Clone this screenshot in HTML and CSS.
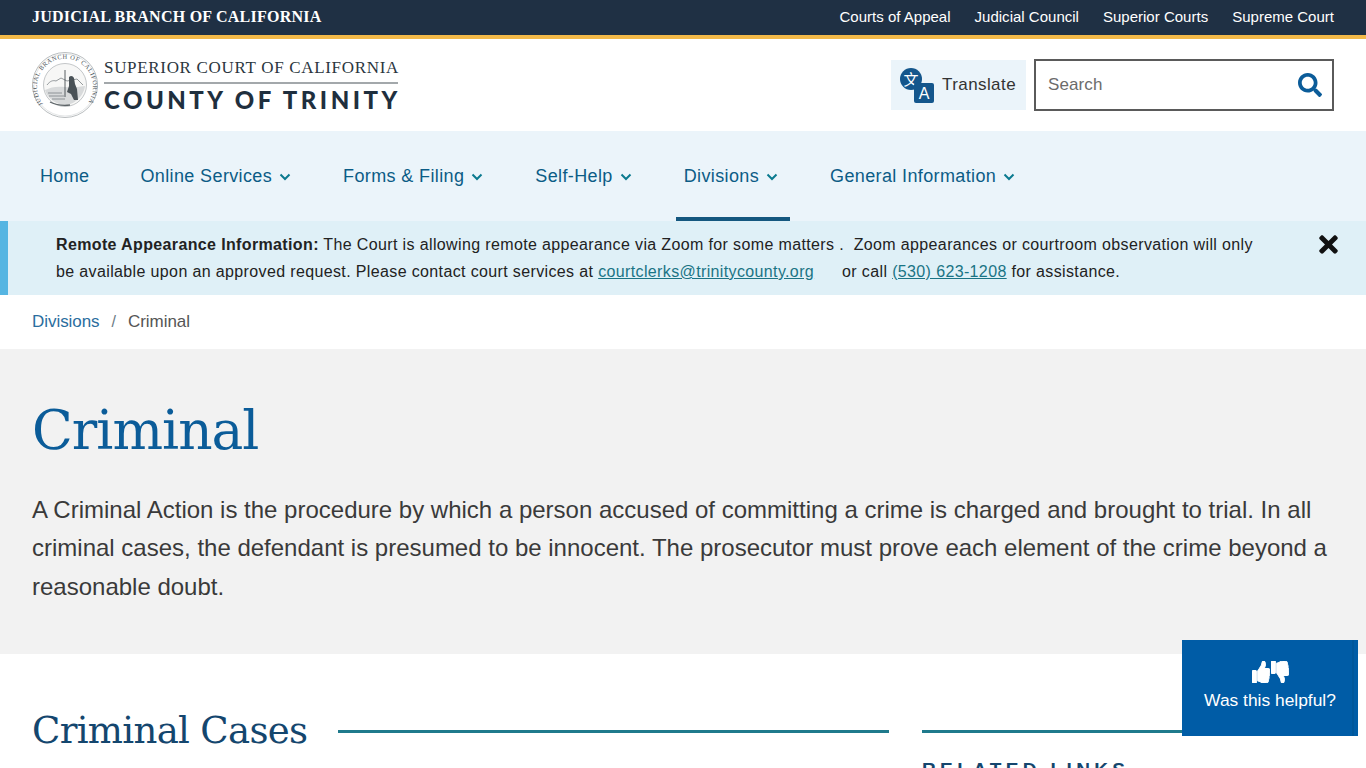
FILE: index.html
```html
<!DOCTYPE html>
<html lang="en">
<head>
<meta charset="utf-8">
<title>Criminal - Superior Court of California, County of Trinity</title>
<link rel="stylesheet" href="styles.css">
</head>
<body>
<div class="topbar">
  <a class="branch" href="#">JUDICIAL BRANCH OF CALIFORNIA</a>
  <nav class="toplinks">
    <a href="#">Courts of Appeal</a>
    <a href="#">Judicial Council</a>
    <a href="#">Superior Courts</a>
    <a href="#">Supreme Court</a>
  </nav>
</div>
<header class="masthead">
  <a class="logo" href="#">
    <svg class="seal" viewBox="0 0 66 66" aria-hidden="true">
      <circle cx="33" cy="33" r="32.5" fill="#fff" stroke="#8a9094" stroke-width=".6"/>
      <circle cx="33" cy="33" r="31" fill="none" stroke="#b9bdc0" stroke-width=".4"/>
      <circle cx="33" cy="33" r="21.500" fill="#f7f7f6" stroke="#8b9094" stroke-width=".5"/>
      <defs><path id="sealArc" d="M11 52A28 28 0 1 1 55 52"/></defs>
      <text class="seal-text"><textPath href="#sealArc">JUDICIAL BRANCH OF CALIFORNIA</textPath></text>
      <path d="M15 33c3-4 6-5 9-4l5-3 6 3 10-2 6 6" fill="none" stroke="#7b8185" stroke-width=".8"/>
      <path d="M13 38c6-3 12-4 20-3 6 1 12 0 20-1-1 9-10 19-20 19-9 0-18-7-20-15z" fill="#d8dadb"/>
      <path d="M16 41h14M17 44h15M20 47h13" stroke="#7b8185" stroke-width=".8"/>
      <path d="M33 18v27" stroke="#30383e" stroke-width=".8"/>
      <path d="M37 25c2-2 4-1 5 1l1 6 2 5 1 11h-4l-3-6-4-2 2-6z" fill="#4a5257"/>
      <path d="M18 50c6 3 12 4 20 3" stroke="#5d6468" stroke-width="1.300" fill="none"/>
    </svg>
    <span class="logo-words">
      <span class="logo-top">SUPERIOR COURT OF CALIFORNIA</span>
      <span class="logo-bottom">COUNTY OF TRINITY</span>
    </span>
  </a>
  <div class="tools">
    <button class="translate" type="button">
      <span class="tr-icon" aria-hidden="true">
        <span class="tr-zh">文</span>
        <span class="tr-en">A</span>
      </span>
      Translate
    </button>
    <form class="search">
      <input class="search-input" type="text" placeholder="Search" aria-label="Search">
      <svg class="search-icon" viewBox="0 0 512 512" aria-hidden="true"><path d="M505 442.7L405.3 343c-4.5-4.5-10.6-7-17-7H372c27.6-35.3 44-79.7 44-128C416 93.1 322.9 0 208 0S0 93.1 0 208s93.1 208 208 208c48.3 0 92.7-16.4 128-44v16.3c0 6.4 2.5 12.5 7 17l99.7 99.7c9.4 9.4 24.6 9.4 33.9 0l28.3-28.3c9.4-9.4 9.4-24.6.1-34zM208 336c-70.7 0-128-57.2-128-128 0-70.7 57.2-128 128-128 70.7 0 128 57.2 128 128 0 70.7-57.2 128-128 128z"/></svg>
    </form>
  </div>
</header>
<nav class="mainnav">
  <a class="nav-item" href="#">Home</a>
  <a class="nav-item" href="#">Online Services<svg class="chev" viewBox="0 0 12 8"><path d="M1.5 1.5 6 6l4.500-4.500"/></svg></a>
  <a class="nav-item" href="#">Forms &amp; Filing<svg class="chev" viewBox="0 0 12 8"><path d="M1.5 1.5 6 6l4.500-4.500"/></svg></a>
  <a class="nav-item" href="#">Self-Help<svg class="chev" viewBox="0 0 12 8"><path d="M1.5 1.5 6 6l4.500-4.500"/></svg></a>
  <a class="nav-item active" href="#">Divisions<svg class="chev" viewBox="0 0 12 8"><path d="M1.5 1.5 6 6l4.500-4.500"/></svg></a>
  <a class="nav-item" href="#">General Information<svg class="chev" viewBox="0 0 12 8"><path d="M1.5 1.5 6 6l4.500-4.500"/></svg></a>
</nav>
<section class="alert">
  <p class="alert-text"><strong>Remote Appearance Information:</strong> The Court is allowing remote appearance via Zoom for some matters .&nbsp; Zoom appearances or courtroom observation will only be available upon an approved request. Please contact court services at <a href="#">courtclerks@trinitycounty.org</a><span class="gap"></span>or call <a href="#">(530) 623-1208</a> for assistance.</p>
  <svg class="alert-close" viewBox="0 0 352 512" aria-label="Close"><path d="M242.72 256l100.07-100.07c12.28-12.28 12.28-32.19 0-44.48l-22.24-22.24c-12.28-12.28-32.19-12.28-44.48 0L176 189.28 75.93 89.21c-12.28-12.28-32.19-12.28-44.48 0L9.21 111.45c-12.28 12.28-12.28 32.19 0 44.48L109.28 256 9.21 356.07c-12.28 12.28-12.28 32.19 0 44.48l22.24 22.24c12.28 12.28 32.2 12.28 44.48 0L176 322.72l100.07 100.07c12.28 12.28 32.2 12.28 44.48 0l22.24-22.24c12.28-12.28 12.28-32.19 0-44.48L242.72 256z"/></svg>
</section>
<nav class="crumbs">
  <a href="#">Divisions</a><span class="sep">/</span><span>Criminal</span>
</nav>
<section class="hero">
  <h1>Criminal</h1>
  <p>A Criminal Action is the procedure by which a person accused of committing a crime is charged and brought to trial. In all criminal cases, the defendant is presumed to be innocent. The prosecutor must prove each element of the crime beyond a reasonable doubt.</p>
</section>
<main class="content">
  <div class="primary">
    <h2>Criminal Cases</h2>
    <span class="rule"></span>
  </div>
  <aside class="side">
    <span class="side-rule"></span>
    <h3>Related Links</h3>
  </aside>
</main>
<button class="helpful" type="button">
  <span class="thumbs" aria-hidden="true">
    <svg viewBox="0 0 512 512" preserveAspectRatio="none"><path d="M104 224H24c-13.255 0-24 10.745-24 24v240c0 13.255 10.745 24 24 24h80c13.255 0 24-10.745 24-24V248c0-13.255-10.745-24-24-24zM384 81.452c0 42.416-25.97 66.208-33.277 94.548h101.723c33.397 0 59.397 27.746 59.553 58.098.084 17.938-7.546 37.249-19.439 49.197l-.11.11c9.836 23.337 8.237 56.037-9.308 79.469 8.681 25.895-.069 57.704-16.382 74.757 4.298 17.598 2.244 32.575-6.148 44.632C440.202 511.587 389.616 512 346.839 512l-2.845-.001c-48.287-.017-87.806-17.598-119.56-31.725-15.957-7.099-36.821-15.887-52.651-16.178-6.54-.12-11.783-5.457-11.783-11.998v-213.77c0-3.2 1.282-6.271 3.558-8.521 39.614-39.144 56.648-80.587 89.117-113.111 14.804-14.832 20.188-37.236 25.393-58.902C282.515 39.293 291.817 0 312 0c24 0 72 8 72 81.452z"/></svg>
    <svg class="down" viewBox="0 0 512 512" preserveAspectRatio="none"><path d="M104 224H24c-13.255 0-24 10.745-24 24v240c0 13.255 10.745 24 24 24h80c13.255 0 24-10.745 24-24V248c0-13.255-10.745-24-24-24zM384 81.452c0 42.416-25.97 66.208-33.277 94.548h101.723c33.397 0 59.397 27.746 59.553 58.098.084 17.938-7.546 37.249-19.439 49.197l-.11.11c9.836 23.337 8.237 56.037-9.308 79.469 8.681 25.895-.069 57.704-16.382 74.757 4.298 17.598 2.244 32.575-6.148 44.632C440.202 511.587 389.616 512 346.839 512l-2.845-.001c-48.287-.017-87.806-17.598-119.56-31.725-15.957-7.099-36.821-15.887-52.651-16.178-6.54-.12-11.783-5.457-11.783-11.998v-213.77c0-3.2 1.282-6.271 3.558-8.521 39.614-39.144 56.648-80.587 89.117-113.111 14.804-14.832 20.188-37.236 25.393-58.902C282.515 39.293 291.817 0 312 0c24 0 72 8 72 81.452z"/></svg>
  </span>
  <span class="helpful-label">Was this helpful?</span>
</button>
</body>
</html>
```
FILE: styles.css
```css
* { box-sizing: border-box; }
html, body { margin: 0; height: 100%; overflow: hidden; }
body { font-family: "Liberation Sans", Arial, sans-serif; color: #333; background: #fff; }
a { text-decoration: none; color: inherit; }

.topbar { height: 39px; background: #1f3044; border-bottom: 4px solid #f2b949; padding: 0 32px 2px; display: flex; justify-content: space-between; align-items: center; color: #fff; }
.branch { font-family: "Liberation Serif", "Times New Roman", serif; font-weight: 700; font-size: 16px; letter-spacing: .24px; }
.toplinks { display: flex; gap: 24px; font-size: 15px; letter-spacing: .01px; }

.masthead { height: 92px; padding: 0 32px; display: flex; justify-content: space-between; align-items: center; }
.logo { display: flex; align-items: center; gap: 6px; }
.seal { width: 66px; height: 66px; display: block; }
.seal-text { font-family: "Liberation Serif", serif; font-size: 6.4px; letter-spacing: .55px; fill: #4a5257; }
.logo-words { display: flex; flex-direction: column; width: 294px; padding-top: 2px; }
.logo-top { font-family: "Liberation Serif", serif; font-size: 17px; letter-spacing: .68px; line-height: 20px; color: #2b3640; border-bottom: 2px solid #a3a8ab; padding-bottom: 4px; white-space: nowrap; }
.logo-bottom { font-family: Lato, sans-serif; font-weight: 900; font-size: 24px; letter-spacing: 3.5px; line-height: 28px; margin-top: 2px; color: #1f2f3e; white-space: nowrap; }

.tools { display: flex; align-items: center; gap: 8px; }
.translate { height: 50px; width: 135px; border: 0; background: #ebf4fa; display: flex; align-items: center; gap: 8px; padding: 0 0 0 9px; font: 17px "Liberation Sans", sans-serif; letter-spacing: .42px; color: #333; }
.tr-icon { position: relative; width: 34px; height: 35px; display: block; flex: none; }
.tr-zh { position: absolute; left: 0; top: 0; width: 22px; height: 22px; border-radius: 50%; background: #14568c; color: #fff; font: 15px/21px "Noto Sans CJK SC", sans-serif; text-align: center; letter-spacing: 0; }
.tr-en { position: absolute; right: 0; bottom: 0; width: 20px; height: 20px; border-radius: 2px; background: #14568c; color: #fff; font: 16px/21px "Liberation Sans", sans-serif; text-align: center; letter-spacing: 0; }
.search { width: 300px; height: 52px; border: 2px solid #5a5a5a; display: flex; align-items: center; padding: 0 10px 0 12px; }
.search-input { flex: 1; min-width: 0; border: 0; outline: 0; padding: 0; background: none; font: 17px "Liberation Sans", sans-serif; letter-spacing: .1px; color: #333; }
.search-input::placeholder { color: #6b6b6b; opacity: 1; }
.search-icon { width: 24px; height: 24px; fill: #0b5c99; flex: none; }

.mainnav { height: 90px; background: #ebf4fa; padding: 0 32px; display: flex; gap: 32px; }
.nav-item { display: flex; align-items: center; height: 90px; padding: 0 12px 0 8px; font-size: 18px; letter-spacing: .37px; color: #0b5c86; border-bottom: 4px solid transparent; padding-top: 4px; }
.nav-item:first-child { padding-right: 11px; }
.nav-item.active { border-bottom-color: #14577f; }
.chev { width: 12px; height: 8px; margin-left: 7px; fill: none; stroke: #0b7a8f; stroke-width: 2; margin-top: 2px; }

.alert { height: 74px; background: #dff0f7; border-left: 8px solid #55b5e2; padding: 10px 28px 0 48px; display: flex; justify-content: space-between; align-items: flex-start; }
.alert-text { margin: 0; width: 1215px; font-size: 16px; line-height: 27px; letter-spacing: .365px; color: #222; }
.alert-text a { color: #1a7485; text-decoration: underline; }
.gap { display: inline-block; width: 28px; }
.alert-close { width: 19px; height: 27px; fill: #111; flex: none; }

.crumbs { height: 54px; padding: 0 32px; display: flex; align-items: center; font-size: 17px; letter-spacing: -.05px; color: #555; }
.crumbs a { color: #2a6d9e; }
.sep { margin: 0 12px; color: #6b7a85; font-size: 16px; }

.hero { height: 305px; background: #f2f2f2; padding: 51px 32px 0; }
.hero h1 { margin: 0 0 29px; font-family: "DejaVu Serif", Georgia, serif; font-weight: 400; font-size: 53.4px; line-height: 62px; color: #0b5c99; letter-spacing: -1px; }
.hero p { margin: 0; font-size: 24px; line-height: 38.4px; color: #3a3a3a; }

.content { display: grid; grid-template-columns: 857px 412px; gap: 33px; padding: 54px 32px 0; align-items: start; }
.primary { display: flex; align-items: center; gap: 31px; height: 46px; }
.primary h2 { margin: 0; font-family: "DejaVu Serif", Georgia, serif; font-weight: 400; font-size: 37.1px; line-height: 46px; color: #14466e; letter-spacing: -.7px; white-space: nowrap; }
.rule { flex: 1; height: 3px; background: #1f7a8c; margin-top: 1px; }
.side-rule { display: block; height: 3px; background: #1f7a8c; margin-top: 22px; }
.side h3 { margin: 25px 0 0; font-size: 19px; line-height: 24px; letter-spacing: 4.37px; text-transform: uppercase; color: #14466e; }

.helpful { position: fixed; right: 8px; bottom: 32px; width: 176px; height: 96px; border: 0; background: linear-gradient(to right, #005ca6 170px, #00579b 170px, #00579b 172px, #005ca6 172px); color: #fff; display: flex; flex-direction: column; align-items: center; padding: 21px 0 0; font: 17.4px/20px "Liberation Sans", sans-serif; }
.thumbs { display: flex; gap: 1px; height: 24px; }
.thumbs svg { width: 18px; height: 22px; fill: #fff; stroke: #fff; stroke-width: 24; }
.thumbs .down { transform: scaleY(-1); }
.helpful-label { margin-top: 5px; }
```
